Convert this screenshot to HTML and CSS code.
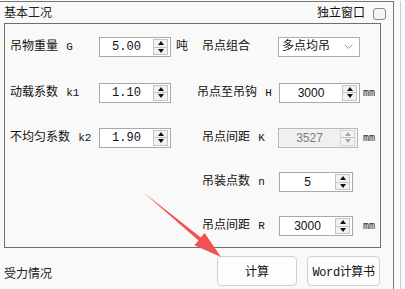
FILE: index.html
```html
<!DOCTYPE html>
<html lang="zh-CN">
<head>
    <meta charset="UTF-8" />
    <title>基本工况</title>
    <link rel="stylesheet" href="styles.css">
</head>
<body>
    <div class="page">
        <div class="frame">
            <div class="head">
                <span class="title">基本工况</span>
                <label class="detach">独立窗口<span class="check"></span></label>
            </div>
            <div class="group">
                <div class="grid">
                    <span class="lbl">吊物重量 <i>G</i></span>
                    <div class="spin"><span class="val">5.00</span><span class="arrows"><span class="up"></span><span class="dn"></span></span></div>
                    <span class="unit">吨</span>
                    <span class="lbl r">吊点组合</span>
                    <div class="combo"><span>多点均吊</span>
                        <svg width="9" height="6" viewBox="0 0 9 6"><polyline points="0.5,0.5 4.5,4.5 8.5,0.5" fill="none" stroke="#9a9a9a" stroke-width="1"/></svg>
                    </div>

                    <span class="lbl">动载系数 <i>k1</i></span>
                    <div class="spin"><span class="val">1.10</span><span class="arrows"><span class="up"></span><span class="dn"></span></span></div>
                    <span class="lbl r wide">吊点至吊钩 <i>H</i></span>
                    <div class="spin long"><span class="val sans">3000</span><span class="arrows"><span class="up"></span><span class="dn"></span></span></div>
                    <span class="mm">mm</span>

                    <span class="lbl">不均匀系数 <i>k2</i></span>
                    <div class="spin"><span class="val">1.90</span><span class="arrows"><span class="up"></span><span class="dn"></span></span></div>
                    <span class="lbl r">吊点间距 <i>K</i></span>
                    <div class="spin long off"><span class="val sans">3527</span><span class="arrows"><span class="up"></span><span class="dn"></span></span></div>
                    <span class="mm">mm</span>

                    <span class="lbl r">吊装点数 <i>n</i></span>
                    <div class="spin mid"><span class="val sans">5</span><span class="arrows"><span class="up"></span><span class="dn"></span></span></div>

                    <span class="lbl r">吊点间距 <i>R</i></span>
                    <div class="spin mid"><span class="val sans">3000</span><span class="arrows"><span class="up"></span><span class="dn"></span></span></div>
                    <span class="mm">mm</span>
                </div>
            </div>
            <div class="foot">
                <span class="title low">受力情况</span>
                <div class="actions">
                    <button class="btn calc">计算</button>
                    <button class="btn word">Word计算书</button>
                </div>
            </div>
        </div>
        <div class="edge"></div>
    </div>
    <svg class="arrow" width="405" height="289" viewBox="0 0 405 289">
        <polygon points="143,192 198.5,240.5 194.4,245.2 221,257 204.6,233 200.8,237.6" fill="#f35252"/>
    </svg>
</body>
</html>
```

FILE: styles.css
```css
body {
    margin: 0;
    background: #f9f9f9;
    font-family: "Liberation Mono", "Noto Sans CJK SC", monospace;
    font-size: 12px;
    color: #111;
}
.page {
    display: flex;
    padding-top: 1px;
    height: 289px;
    box-sizing: border-box;
}
.frame {
    width: 394px;
    border-top: 1px solid #767676;
    border-right: 1px solid #767676;
    padding-left: 4px;
    box-sizing: border-box;
}
.edge {
    width: 1px;
    margin-left: 6px;
    background: #cdcdcd;
}
.head {
    display: flex;
    justify-content: space-between;
    align-items: center;
    height: 21px;
    padding-top: 3px;
    margin-right: 7px;
    box-sizing: border-box;
}
.title {
    line-height: 16px;
    color: #222;
}
.detach {
    display: flex;
    align-items: center;
    gap: 8px;
    line-height: 16px;
}
.check {
    width: 13px;
    height: 12px;
    border: 1px solid #8a8a8a;
    border-radius: 3px;
    background: #f4f4f4;
    box-sizing: border-box;
}
.group {
    width: 377px;
    height: 225px;
    border: 1px solid #6f6f6f;
    padding-left: 5px;
    box-sizing: border-box;
}
.grid {
    display: grid;
    grid-template-columns: 89px 72px 28px 80px 84px auto;
    grid-template-rows: 46px 45px 45px 44px 44px;
    align-items: center;
}
.lbl {
    grid-column: 1;
    line-height: 16px;
    white-space: nowrap;
}
.lbl i {
    font-style: normal;
    font-size: 11px;
    padding-left: 1px;
}
.lbl.r {
    grid-column: 4;
    padding-left: 3px;
}
.lbl.wide {
    padding-left: 0;
    margin-left: -2px;
}
.unit {
    padding-left: 5px;
    line-height: 16px;
}
.mm {
    font-family: "DejaVu Sans Mono", monospace;
    font-size: 10px;
    line-height: 14px;
    color: #222;
}
.spin {
    display: flex;
    width: 72px;
    height: 20px;
    border: 1px solid #a9a9a9;
    background: #fff;
    box-sizing: border-box;
}
.spin.long {
    width: 81px;
}
.spin.mid {
    width: 74px;
}
.spin .val {
    flex: 1;
    text-align: center;
    line-height: 18px;
}
.spin .val.sans {
    font-family: "Liberation Sans", sans-serif;
    font-size: 12px;
}
.arrows {
    width: 13px;
    margin: 1px 2px 1px 0;
    display: flex;
    flex-direction: column;
    border: 1px solid #c4c4c4;
    background: #f2f2f2;
}
.arrows span {
    flex: 1;
    display: flex;
    align-items: center;
    justify-content: center;
}
.arrows span + span {
    border-top: 1px solid #c4c4c4;
}
.up::before, .dn::before {
    content: "";
    border-left: 3px solid transparent;
    border-right: 3px solid transparent;
}
.up::before {
    border-bottom: 4px solid #111;
}
.dn::before {
    border-top: 4px solid #111;
}
.spin.off {
    background: #f0f0f0;
    border-color: #b9b9b9;
    color: #7c7c7c;
    margin-left: -1px;
    width: 80px;
}
.spin.off .arrows {
    border-color: #d6d6d6;
}
.spin.off .up::before {
    border-bottom-color: #a8a8a8;
}
.spin.off .dn::before {
    border-top-color: #a8a8a8;
}
.combo {
    display: flex;
    align-items: center;
    justify-content: space-between;
    width: 82px;
    height: 20px;
    margin-left: -1px;
    padding: 0 6px 0 3px;
    border: 1px solid #adadad;
    background: #fff;
    box-sizing: border-box;
    line-height: 16px;
}
.foot {
    display: flex;
    justify-content: space-between;
    align-items: center;
    width: 377px;
    margin-top: 8px;
}
.title.low {
    margin-top: 7px;
}
.actions {
    display: flex;
    gap: 10px;
    margin-right: 1px;
}
.btn {
    height: 30px;
    background: #fdfdfd;
    border: 1px solid #d0d0d0;
    border-radius: 4px;
    font-family: "Liberation Mono", "Noto Sans CJK SC", monospace;
    font-size: 12px;
    color: #111;
    padding: 0;
}
.btn.calc {
    width: 80px;
}
.btn.word {
    width: 73px;
    letter-spacing: -0.4px;
}
.arrow {
    position: absolute;
    top: 0;
    left: 0;
    pointer-events: none;
}
```
